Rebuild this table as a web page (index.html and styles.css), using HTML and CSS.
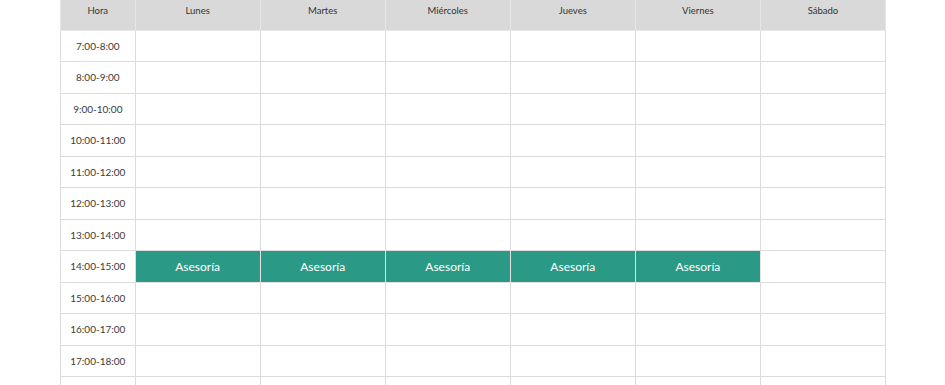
FILE: index.html
```html
<!DOCTYPE html>
<html lang="es">
<head>
<meta charset="utf-8">
<link rel="stylesheet" href="styles.css">
</head>
<body>
<table class="schedule">
  <thead>
    <tr>
      <th class="col-hora">Hora</th>
      <th>Lunes</th>
      <th>Martes</th>
      <th>Miércoles</th>
      <th>Jueves</th>
      <th>Viernes</th>
      <th>Sábado</th>
    </tr>
  </thead>
  <tbody>
    <tr><td class="time">7:00-8:00</td><td></td><td></td><td></td><td></td><td></td><td></td></tr>
    <tr><td class="time">8:00-9:00</td><td></td><td></td><td></td><td></td><td></td><td></td></tr>
    <tr><td class="time">9:00-10:00</td><td></td><td></td><td></td><td></td><td></td><td></td></tr>
    <tr><td class="time">10:00-11:00</td><td></td><td></td><td></td><td></td><td></td><td></td></tr>
    <tr><td class="time">11:00-12:00</td><td></td><td></td><td></td><td></td><td></td><td></td></tr>
    <tr><td class="time">12:00-13:00</td><td></td><td></td><td></td><td></td><td></td><td></td></tr>
    <tr><td class="time">13:00-14:00</td><td></td><td></td><td></td><td></td><td></td><td></td></tr>
    <tr><td class="time">14:00-15:00</td><td class="event">Asesoría</td><td class="event">Asesoría</td><td class="event">Asesoría</td><td class="event">Asesoría</td><td class="event">Asesoría</td><td></td></tr>
    <tr><td class="time">15:00-16:00</td><td></td><td></td><td></td><td></td><td></td><td></td></tr>
    <tr><td class="time">16:00-17:00</td><td></td><td></td><td></td><td></td><td></td><td></td></tr>
    <tr><td class="time">17:00-18:00</td><td></td><td></td><td></td><td></td><td></td><td></td></tr>
    <tr><td class="time"></td><td></td><td></td><td></td><td></td><td></td><td></td></tr>
  </tbody>
</table>
</body>
</html>
```
FILE: styles.css
```css
html, body {
  margin: 0;
  padding: 0;
  background: #ffffff;
}
body {
  font-family: Lato, "Open Sans", "Liberation Sans", sans-serif;
  color: #333333;
}
.schedule {
  border-collapse: collapse;
  table-layout: fixed;
  width: 826px;
  margin-left: 60px;
  margin-top: 0;
}
.schedule th,
.schedule td {
  border: 1px solid #dcdcdc;
  text-align: center;
  padding: 0;
  width: 124px;
}
.schedule th.col-hora,
.schedule td.time {
  width: 74px;
}
.schedule thead th {
  background: #d9d9d9;
  border-top: none;
  border-color: #e6e6e6;
  height: 30px;
  box-sizing: border-box;
  vertical-align: top;
  padding-top: 5px;
  font-size: 9.5px;
  font-weight: normal;
  color: #333333;
}
.schedule tbody td {
  height: 30.5px;
  font-size: 10px;
  vertical-align: middle;
  color: #3a3a3a;
}
.schedule td.event {
  background: #2a9a86;
  color: #ffffff;
  font-size: 12px;
  border-color: #e3e3e3;
}
```
